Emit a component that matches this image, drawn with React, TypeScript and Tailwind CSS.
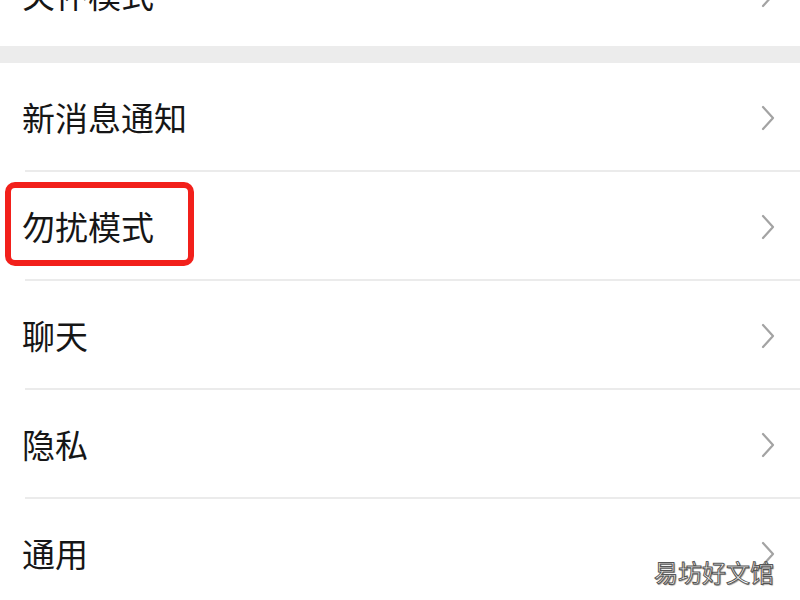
import React from "react";

const Chevron = () => (
  <svg width="16" height="26" viewBox="0 0 16 26" className="shrink-0">
    <path d="M3 2 L13 13 L3 24" fill="none" stroke="#a3a3a3" strokeWidth="2.2" strokeLinecap="round" strokeLinejoin="round" />
  </svg>
);

const font = { fontFamily: '"Noto Sans CJK SC", "Noto Sans", sans-serif' };

function Row({ label, last }: { label: string; last?: boolean }) {
  return (
    <div className="relative flex h-[109px] items-center pl-[22px] pr-[24px]">
      <span className="flex-1 text-[33px] leading-none text-[#161616] tracking-[0px]" style={font}>
        {label}
      </span>
      <Chevron />
      {!last && <div className="absolute bottom-0 left-[25px] right-0 h-[2px] bg-[#ebebeb]" />}
    </div>
  );
}

export default function App() {
  return (
    <div className="relative h-[600px] w-[800px] overflow-hidden bg-white" style={font}>
      <div className="h-[46px] overflow-hidden bg-white">
        <div className="mt-[-60px]">
          <Row label="关怀模式" last />
        </div>
      </div>
      <div className="h-[17px] bg-[#ececec]" />
      <div className="relative">
        <Row label="新消息通知" />
        <div className="relative">
          <Row label="勿扰模式" />
          <div className="absolute left-[5px] top-[10px] h-[84px] w-[189px] rounded-[10px] border-[6px] border-[#f2201b]" />
        </div>
        <Row label="聊天" />
        <Row label="隐私" />
        <Row label="通用" last />
      </div>
      <div
        className="absolute bottom-[16px] right-[26px] text-[24px] leading-none text-white"
        style={{ ...font, WebkitTextStroke: "1px #555", textShadow: "1px 1px 1px #888" }}
      >
        易坊好文馆
      </div>
    </div>
  );
}
